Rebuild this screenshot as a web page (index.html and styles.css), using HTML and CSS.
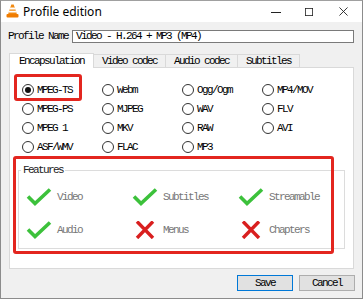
FILE: index.html
```html
<!DOCTYPE html>
<html>
<head>
<meta charset="utf-8">
<link rel="stylesheet" href="styles.css">
</head>
<body>
<div class="window">
  <div class="titlebar">
    <svg class="app-icon" width="13" height="14" viewBox="0 0 13 14">
      <path d="M5.3 0.5 H7.7 L11 10.5 H2z" fill="#f28a11"/>
      <path d="M4.3 3.6 H8.7 L9.3 5.4 H3.7z" fill="#fff"/>
      <path d="M3.3 6.8 H9.7 L10.3 8.6 H2.7z" fill="#fff"/>
      <rect x="0.5" y="10" width="12" height="3.5" rx="1" fill="#f07c00"/>
    </svg>
    <span class="title">Profile edition</span>
    <div class="controls">
      <svg class="ctl" width="10" height="10" viewBox="0 0 10 10"><path d="M0 5.5 H10" stroke="#222" stroke-width="1"/></svg>
      <svg class="ctl" width="10" height="10" viewBox="0 0 10 10"><rect x="0.5" y="0.5" width="9" height="9" fill="none" stroke="#222" stroke-width="1"/></svg>
      <svg class="ctl" width="10" height="10" viewBox="0 0 10 10"><path d="M0.5 0.5 L9.5 9.5 M9.5 0.5 L0.5 9.5" stroke="#222" stroke-width="1"/></svg>
    </div>
  </div>

  <div class="name-row">
    <span class="name-label">Profile Name</span>
    <div class="name-input">Video - H.264 + MP3 (MP4)</div>
  </div>

  <div class="tabs">
    <div class="tab active">Encapsulation</div>
    <div class="tab">Video codec</div>
    <div class="tab">Audio codec</div>
    <div class="tab">Subtitles</div>
  </div>

  <div class="panel">
    <div class="radios">
      <label class="radio"><span class="dot checked"></span>MPEG-TS</label>
      <label class="radio"><span class="dot"></span>Webm</label>
      <label class="radio"><span class="dot"></span>Ogg/Ogm</label>
      <label class="radio"><span class="dot"></span>MP4/MOV</label>
      <label class="radio"><span class="dot"></span>MPEG-PS</label>
      <label class="radio"><span class="dot"></span>MJPEG</label>
      <label class="radio"><span class="dot"></span>WAV</label>
      <label class="radio"><span class="dot"></span>FLV</label>
      <label class="radio"><span class="dot"></span>MPEG 1</label>
      <label class="radio"><span class="dot"></span>MKV</label>
      <label class="radio"><span class="dot"></span>RAW</label>
      <label class="radio"><span class="dot"></span>AVI</label>
      <label class="radio"><span class="dot"></span>ASF/WMV</label>
      <label class="radio"><span class="dot"></span>FLAC</label>
      <label class="radio"><span class="dot"></span>MP3</label>
    </div>

    <fieldset class="features">
      <legend>Features</legend>
      <div class="feature"><svg class="yes" width="26" height="18" viewBox="0 0 26 18"><path d="M2 8.5 L9 15.5 L24 1.5" fill="none" stroke="#3cc13b" stroke-width="3.6"/></svg><span>Video</span></div>
      <div class="feature"><svg class="yes" width="26" height="18" viewBox="0 0 26 18"><path d="M2 8.5 L9 15.5 L24 1.5" fill="none" stroke="#3cc13b" stroke-width="3.6"/></svg><span>Subtitles</span></div>
      <div class="feature"><svg class="yes" width="26" height="18" viewBox="0 0 26 18"><path d="M2 8.5 L9 15.5 L24 1.5" fill="none" stroke="#3cc13b" stroke-width="3.6"/></svg><span>Streamable</span></div>
      <div class="feature"><svg class="yes" width="26" height="18" viewBox="0 0 26 18"><path d="M2 8.5 L9 15.5 L24 1.5" fill="none" stroke="#3cc13b" stroke-width="3.6"/></svg><span>Audio</span></div>
      <div class="feature"><svg class="no" width="26" height="18" viewBox="0 0 26 18"><path d="M5 0.5 L21 17 M21 0.5 L5 17" fill="none" stroke="#d91f1f" stroke-width="3.4"/></svg><span>Menus</span></div>
      <div class="feature"><svg class="no" width="26" height="18" viewBox="0 0 26 18"><path d="M5 0.5 L21 17 M21 0.5 L5 17" fill="none" stroke="#d91f1f" stroke-width="3.4"/></svg><span>Chapters</span></div>
    </fieldset>
  </div>

  <div class="buttons">
    <button class="btn default">Save</button>
    <button class="btn">Cancel</button>
  </div>

  <div class="highlight hl-ts"></div>
  <div class="highlight hl-features"></div>
</div>
</body>
</html>
```

FILE: styles.css
```css
html, body {
  margin: 0;
  padding: 0;
}

body {
  width: 363px;
  height: 299px;
  overflow: hidden;
  background: #f0f0f0;
}

.window {
  position: relative;
  box-sizing: border-box;
  width: 363px;
  height: 299px;
  border: 1px solid #8c8c8c;
  border-top-color: #a0a0a0;
  background: #f0f0f0;
  font-family: "Liberation Mono", "DejaVu Sans Mono", monospace;
  font-size: 11px;
  letter-spacing: -1.6px;
  color: #000;
}

.titlebar {
  display: flex;
  align-items: center;
  height: 21px;
  background: #ffffff;
  letter-spacing: 0;
}

.app-icon {
  margin-left: 5px;
  margin-top: -1px;
}

.title {
  margin-left: 4px;
  font-family: "Noto Sans", "Open Sans", sans-serif;
  font-size: 12px;
  color: #000;
}

.controls {
  margin-left: auto;
  display: flex;
  align-items: center;
}

.ctl {
  display: block;
}

.controls .ctl:nth-child(1) { margin-right: 24px; }
.controls .ctl:nth-child(2) { margin-right: 26px; width: 8px; height: 8px; }
.controls .ctl:nth-child(3) { margin-right: 14px; width: 9px; height: 9px; }

.name-row {
  display: flex;
  align-items: center;
  margin-top: 8px;
  height: 13px;
}

.name-label {
  width: 64px;
  padding-left: 7px;
  line-height: 13px;
}

.name-input {
  flex: 1;
  box-sizing: border-box;
  height: 13px;
  margin-right: 8px;
  padding-left: 3px;
  line-height: 11px;
  border: 1px solid #7a7a7a;
  background: #fff;
  white-space: nowrap;
}

.tabs {
  display: flex;
  align-items: flex-end;
  margin-top: 9px;
  margin-left: 8px;
  height: 15px;
}

.tab {
  box-sizing: border-box;
  height: 13px;
  padding: 0 8px;
  line-height: 12px;
  border: 1px solid #d9d9d9;
  border-bottom: none;
  border-left: none;
  background: #f0f0f0;
}

.tab.active {
  height: 15px;
  padding: 0 9px;
  line-height: 14px;
  background: #fff;
  border-left: 1px solid #d9d9d9;
  position: relative;
  top: 1px;
}

.panel {
  box-sizing: border-box;
  height: 202px;
  margin-left: 8px;
  margin-right: 8px;
  padding-top: 12px;
  border: 1px solid #d9d9d9;
  background: #ffffff;
}

.radios {
  display: grid;
  grid-template-columns: 80px 80px 80px 80px;
  grid-auto-rows: 19px;
  padding-left: 12px;
}

.radio {
  display: flex;
  align-items: center;
}

.dot {
  box-sizing: border-box;
  width: 12px;
  height: 12px;
  margin-right: 3px;
  border: 1px solid #333;
  border-radius: 50%;
  background: #fff;
  display: flex;
  align-items: center;
  justify-content: center;
}

.dot.checked::after {
  content: "";
  width: 6px;
  height: 6px;
  border-radius: 50%;
  background: #111;
}

.features {
  display: grid;
  grid-template-columns: 106px 106px 106px;
  grid-auto-rows: 33px;
  margin: 8px 8px 0 8px;
  padding: 4px 0 2px 7px;
  border: 1px solid #dcdcdc;
  min-width: 0;
}

.features legend {
  margin-left: -5px;
  padding: 0 2px;
  line-height: 12px;
  color: #222;
}

.feature {
  display: flex;
  align-items: center;
}

.feature svg {
  display: block;
  margin-right: 5px;
}

.feature span {
  color: #777;
}

.buttons {
  display: flex;
  justify-content: flex-end;
  gap: 6px;
  margin-top: 6px;
  margin-right: 7px;
}

.btn {
  box-sizing: border-box;
  width: 56px;
  height: 16px;
  padding: 0;
  border: 1px solid #adadad;
  background: #e1e1e1;
  font-family: "Liberation Mono", "DejaVu Sans Mono", monospace;
  font-size: 11px;
  letter-spacing: -1.6px;
  color: #000;
  line-height: 14px;
}

.btn.default {
  border-color: #0078d7;
}

.highlight {
  position: absolute;
  box-sizing: border-box;
  border: 3px solid #e3261f;
  border-radius: 3px;
  pointer-events: none;
}

.hl-ts {
  left: 13px;
  top: 73px;
  width: 68px;
  height: 27px;
}

.hl-features {
  left: 12px;
  top: 155px;
  width: 321px;
  height: 98px;
}
```
